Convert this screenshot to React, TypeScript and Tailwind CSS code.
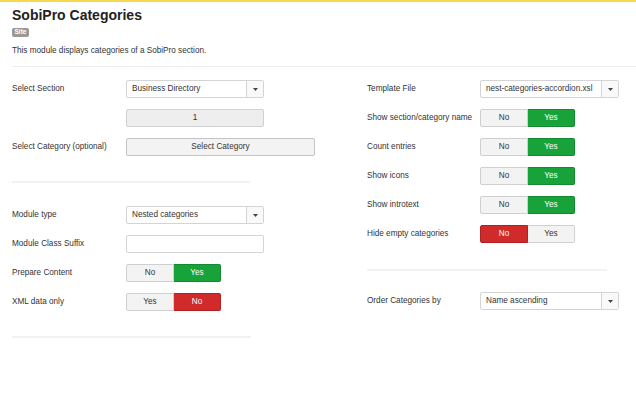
import React from "react";

const font = { fontFamily: '"Liberation Sans", Arial, Helvetica, sans-serif' };

function Caret() {
  return (
    <svg width="5" height="3" viewBox="0 0 5 3" className="block">
      <path d="M0 0 L5 0 L2.5 3 Z" fill="#444" />
    </svg>
  );
}

function Select({ value, width }: { value: string; width: string }) {
  return (
    <div className={`flex h-[18px] ${width} shrink-0 items-stretch rounded-[2px] border border-[#d4d4d4] bg-white`}>
      <div className="flex flex-1 items-center pl-[5px] text-[8.2px] text-[#333]">{value}</div>
      <div className="flex w-[17px] items-center justify-center border-l border-[#d4d4d4] bg-[#f9f9f9]">
        <Caret />
      </div>
    </div>
  );
}

function Toggle({
  left,
  right,
  active,
  color,
}: {
  left: string;
  right: string;
  active: "left" | "right";
  color: "green" | "red";
}) {
  const on = color === "green" ? "bg-[#17a23a] border-[#138a30] text-white" : "bg-[#d02a2a] border-[#b02222] text-white";
  const off = "bg-[#f3f3f3] border-[#cfcfcf] text-[#333]";
  return (
    <div className="flex h-[18px] w-[95px] shrink-0 text-[8.2px]">
      <div
        className={`flex flex-1 items-center justify-center rounded-l-[2px] border ${active === "left" ? on : off}`}
      >
        {left}
      </div>
      <div
        className={`flex flex-1 items-center justify-center rounded-r-[2px] border border-l-0 ${active === "right" ? on : off}`}
      >
        {right}
      </div>
    </div>
  );
}

function Row({ label, children, labelW }: { label: string; children?: React.ReactNode; labelW: string }) {
  return (
    <div className="mb-[11px] flex h-[18px] items-center">
      <div className={`${labelW} shrink-0 text-[8.2px] text-[#333]`}>{label}</div>
      {children}
    </div>
  );
}

export default function App() {
  return (
    <div className="h-[394px] w-[636px] overflow-hidden border-t-2 border-[#f6d94e] bg-white" style={font}>
      <div className="pl-[12px] pt-[5px]">
        <div className="h-[16px] text-[14px] font-bold leading-[16px] text-[#222]">SobiPro Categories</div>
        <div className="mt-[5px] flex h-[9px] w-[17px] items-center justify-center rounded-[2px] bg-[#999] text-[6.5px] font-bold leading-none text-white">
          Site
        </div>
        <div className="mt-[8px] h-[12px] text-[8.2px] leading-[12px] text-[#333]">
          This module displays categories of a SobiPro section.
        </div>
        <div className="mt-[9px] h-px bg-[#ececec]" />
      </div>

      <div className="flex pt-[13px]">
        <div className="ml-[12px] flex w-[239px] flex-col">
          <Row label="Select Section" labelW="w-[114px]">
            <Select value="Business Directory" width="w-[138px]" />
          </Row>
          <Row label="" labelW="w-[114px]">
            <div className="flex h-[18px] w-[138px] shrink-0 items-center justify-center rounded-[2px] border border-[#d0d0d0] bg-[#eeeeee] text-[8.2px] text-[#333]">
              1
            </div>
          </Row>
          <Row label="Select Category (optional)" labelW="w-[114px]">
            <div className="flex h-[18px] w-[189px] shrink-0 items-center justify-center rounded-[2px] border border-[#c4c4c4] bg-[#f3f3f3] text-[8.2px] text-[#333]">
              Select Category
            </div>
          </Row>
          <div className="mt-[14px] h-[2px] bg-[#f2f2f2]" />
          <div className="h-[23px]" />
          <Row label="Module type" labelW="w-[114px]">
            <Select value="Nested categories" width="w-[138px]" />
          </Row>
          <Row label="Module Class Suffix" labelW="w-[114px]">
            <div className="h-[18px] w-[138px] shrink-0 rounded-[2px] border border-[#d4d4d4] bg-white" />
          </Row>
          <Row label="Prepare Content" labelW="w-[114px]">
            <Toggle left="No" right="Yes" active="right" color="green" />
          </Row>
          <Row label="XML data only" labelW="w-[114px]">
            <Toggle left="Yes" right="No" active="right" color="red" />
          </Row>
          <div className="mt-[14px] h-[2px] bg-[#f2f2f2]" />
        </div>

        <div className="ml-[116px] flex w-[240px] flex-col">
          <Row label="Template File" labelW="w-[113px]">
            <Select value="nest-categories-accordion.xsl" width="w-[139px]" />
          </Row>
          <Row label="Show section/category name" labelW="w-[113px]">
            <Toggle left="No" right="Yes" active="right" color="green" />
          </Row>
          <Row label="Count entries" labelW="w-[113px]">
            <Toggle left="No" right="Yes" active="right" color="green" />
          </Row>
          <Row label="Show icons" labelW="w-[113px]">
            <Toggle left="No" right="Yes" active="right" color="green" />
          </Row>
          <Row label="Show introtext" labelW="w-[113px]">
            <Toggle left="No" right="Yes" active="right" color="green" />
          </Row>
          <Row label="Hide empty categories" labelW="w-[113px]">
            <Toggle left="No" right="Yes" active="left" color="red" />
          </Row>
          <div className="mt-[15px] h-[2px] bg-[#f2f2f2]" />
          <div className="h-[21px]" />
          <Row label="Order Categories by" labelW="w-[113px]">
            <Select value="Name ascending" width="w-[139px]" />
          </Row>
        </div>
      </div>
    </div>
  );
}
